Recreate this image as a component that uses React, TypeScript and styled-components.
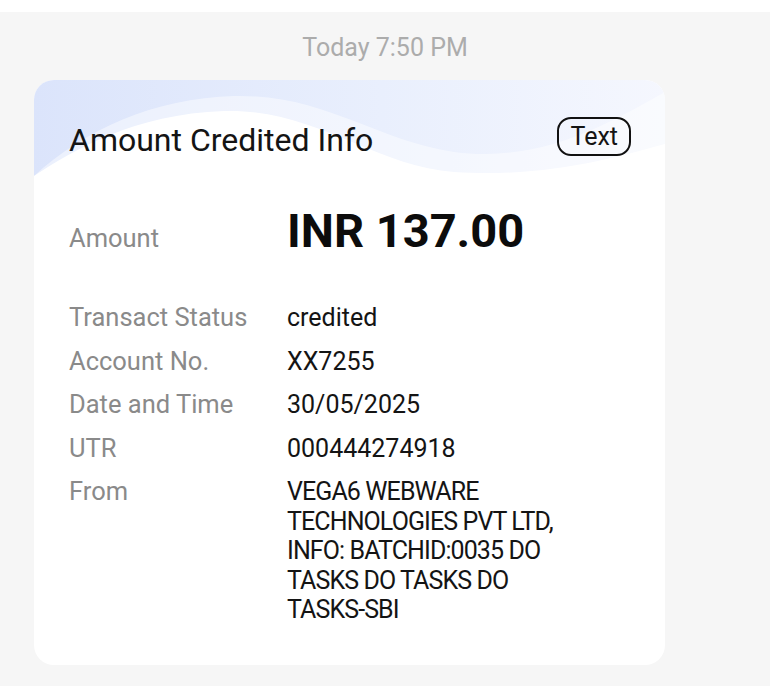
import React from "react";
import styled, { createGlobalStyle } from "styled-components";

const Global = createGlobalStyle`
  html, body { margin: 0; padding: 0; background: #f6f6f6; }
  body { font-family: Roboto, "Noto Sans", Arial, sans-serif; -webkit-font-smoothing: antialiased; }
`;

const Page = styled.div`
  min-height: 686px;
  background: #f6f6f6;
  display: flex;
  flex-direction: column;
`;

const TopStrip = styled.div`
  height: 12px;
  background: #ffffff;
`;

const Stamp = styled.div`
  margin-top: 21px;
  text-align: center;
  font-size: 25px;
  line-height: 30px;
  color: #acacac;
`;

const Card = styled.div`
  margin: 17px 0 0 34px;
  width: 631px;
  background: #ffffff;
  border-radius: 20px;
  overflow: hidden;
  padding-bottom: 40px;
`;

const Header = styled.div`
  position: relative;
  height: 96px;
  background: linear-gradient(90deg, #dbe4fb 0%, #e9effd 55%, #f5f7fe 100%);
`;

const Waves = styled.svg`
  position: absolute;
  inset: 0;
  width: 100%;
  height: 100%;
`;

const HeaderRow = styled.div`
  position: relative;
  display: flex;
  justify-content: space-between;
  align-items: flex-start;
  padding: 37px 34px 0 35px;
`;

const Title = styled.div`
  margin-top: 3px;
  font-size: 32px;
  line-height: 40px;
  color: #141414;
`;

const Tag = styled.div`
  height: 35px;
  padding: 0 11px;
  border: 2px solid #111;
  border-radius: 14px;
  font-size: 25px;
  line-height: 35px;
  color: #141414;
`;

const Body = styled.div`
  padding: 28px 35px 0 35px;
  display: flex;
  flex-direction: column;
`;

const AmountRow = styled.div`
  display: grid;
  grid-template-columns: 218px 1fr;
  align-items: baseline;
  margin-bottom: 45px;
`;

const Label = styled.div`
  font-size: 25.5px;
  line-height: 29.5px;
  color: #8a8a8a;
`;

const BigValue = styled.div`
  font-size: 47px;
  line-height: 54px;
  font-weight: 700;
  color: #0c0c0c;
`;

const Rows = styled.div`
  display: flex;
  flex-direction: column;
  gap: 14px;
`;

const Row = styled.div`
  display: grid;
  grid-template-columns: 218px 300px;
`;

const Value = styled.div<{ $condensed?: boolean }>`
  font-size: 25px;
  line-height: 29.5px;
  letter-spacing: ${(p) => (p.$condensed ? "-0.9px" : "0")};
  color: #141414;
`;

const NoWrap = styled.span`
  white-space: nowrap;
`;

const rows: [string, React.ReactNode, boolean][] = [
  ["Transact Status", "credited", false],
  ["Account No.", "XX7255", false],
  ["Date and Time", "30/05/2025", false],
  ["UTR", "000444274918", false],
  [
    "From",
    <>
      VEGA6 WEBWARE TECHNOLOGIES PVT LTD, INFO: BATCHID:0035 DO TASKS DO TASKS DO{" "}
      <NoWrap>TASKS-SBI</NoWrap>
    </>,
    true,
  ],
];

export default function App() {
  return (
    <Page>
      <Global />
      <TopStrip />
      <Stamp>Today 7:50 PM</Stamp>
      <Card>
        <Header>
          <Waves viewBox="0 0 631 96" preserveAspectRatio="none">
            <path
              d="M0 96 C 50 50 120 18 200 16 C 290 14 340 60 420 72 C 510 84 580 40 631 12 L631 96 Z"
              fill="#ffffff"
              opacity="0.45"
            />
            <path
              d="M0 96 C 40 70 100 34 190 31 C 280 28 340 86 420 92 C 510 98 580 78 631 64 L631 96 Z"
              fill="#ffffff"
            />
          </Waves>
          <HeaderRow>
            <Title>Amount Credited Info</Title>
            <Tag>Text</Tag>
          </HeaderRow>
        </Header>
        <Body>
          <AmountRow>
            <Label>Amount</Label>
            <BigValue>INR 137.00</BigValue>
          </AmountRow>
          <Rows>
            {rows.map(([l, v, c]) => (
              <Row key={l}>
                <Label>{l}</Label>
                <Value $condensed={c}>{v}</Value>
              </Row>
            ))}
          </Rows>
        </Body>
      </Card>
    </Page>
  );
}
